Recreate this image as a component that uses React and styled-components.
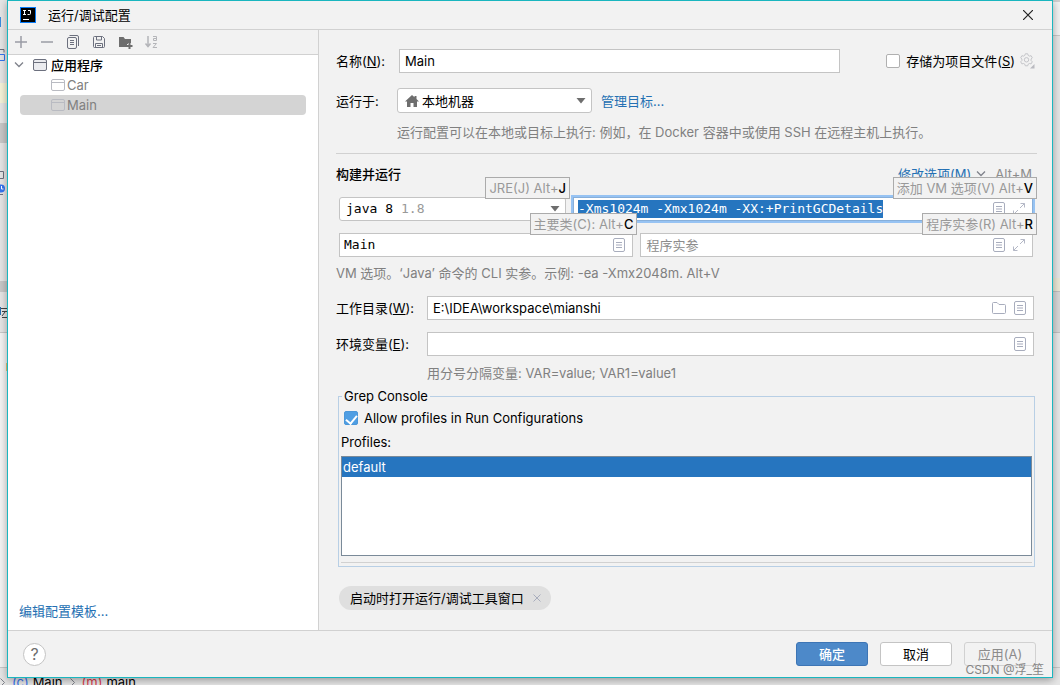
import React, { useEffect, useRef } from "react";
import styled, { createGlobalStyle } from "styled-components";

const DocIcon = () => (
  <svg width="12" height="14" viewBox="0 0 12 14" fill="none">
    <rect x="0.5" y="0.5" width="11" height="13" rx="1.5" stroke="#a8adbd" />
    <path d="M3 4.5h6M3 9.5h6" stroke="#a8adbd" />
    <path d="M3 7h6" stroke="#d3d5de" strokeWidth="2" />
  </svg>
);

const ExpandIcon = () => (
  <svg width="12" height="12" viewBox="0 0 12 12" fill="none" stroke="#b4b8c6">
    <path d="M7.500 .5h4V4.500M11.500 .5L7 5M4.500 11.500h-4V7.500M.5 11.500L5 7" />
  </svg>
);

const FolderIcon = () => (
  <svg width="14" height="12" viewBox="0 0 14 12" fill="none" stroke="#a8adbd">
    <path d="M.5 10V1.500Q.5 .5 1.500 .5H5L7 2.500h5.500q1 0 1 1V10.500q0 1-1 1h-11q-1 0-1-1z" />
  </svg>
);

const AppIcon = ({ faded }) => (
  <svg width="14" height="12" viewBox="0 0 14 12" fill="none">
    <rect
      x="0.5"
      y="0.5"
      width="13"
      height="11"
      rx="1.5"
      fill={faded ? "none" : "#ebecf0"}
      stroke={faded ? "#b9bbc2" : "#6c707e"}
    />
    <path d="M.5 3.500h13" stroke={faded ? "#b9bbc2" : "#6c707e"} />
  </svg>
);

const LogoIcon = () => (
  <svg width="16" height="16" viewBox="0 0 16 16" fill="none">
    <rect x="0.5" y="0.5" width="15" height="15" fill="#000" stroke="#087cfa" />
    <path
      d="M3 3.500h3M4.500 3.500v4M3 7.500h3M8 3.500h2.500V6.500q0 1-1 1H7.500"
      stroke="#fff"
    />
    <path d="M3 12.500h6" stroke="#fff" />
  </svg>
);

const HomeIcon = () => (
  <svg width="14" height="12" viewBox="0 0 14 12" fill="#6e6e6e">
    <path d="M7 0L0 6.500h2V12h3.500V8h3v4H12V6.500h2L11.500 4V1H9.500v1.300z" />
  </svg>
);

const ArrowIcon = () => (
  <svg width="10" height="6" viewBox="0 0 10 6" fill="#6e6e6e">
    <path d="M.5 0h9L5 5.500z" />
  </svg>
);

const ChevronIcon = () => (
  <svg width="10" height="6" viewBox="0 0 10 6" fill="none" stroke="#7f828b">
    <path d="M1 .5l4 4 4-4" strokeWidth="1.300" />
  </svg>
);

const CrumbIcon = () => (
  <svg width="5" height="9" viewBox="0 0 5 9" fill="none" stroke="#7f828b">
    <path d="M.5 .5l4 4-4 4" />
  </svg>
);

const GearIcon = () => (
  <svg width="16" height="16" viewBox="0 0 16 16" fill="none" stroke="#c4c5c9">
    <path d="M5.800 2.400L6.300 .8h2.400l.5 1.600 1.200.7 1.700-.4 1.200 2.100-1.200 1.200v1.600l1.200 1.200-1.200 2.100-1.700-.4-1.200.7-.5 1.600H6.300l-.5-1.600-1.200-.7-1.700.4L1.700 8.800l1.200-1.200V6L1.700 4.800l1.200-2.100 1.700.4z" />
    <circle cx="7.500" cy="6.800" r="2.200" />
    <path d="M15.500 11v4.500H11z" fill="#b9bac0" stroke="none" />
  </svg>
);

const tools = [
  {
    name: "添加",
    icon: <path d="M8 2v12M2 8h12" stroke="#9a9ca5" strokeWidth="1.500" />,
  },
  { name: "移除", icon: <path d="M2 8h12" stroke="#9a9ca5" strokeWidth="1.500" /> },
  {
    name: "复制",
    icon: (
      <g stroke="#6c707e">
        <rect x="2.500" y="3.500" width="9" height="11" rx="1.500" />
        <path d="M4.500 1.500H12q1.500 0 1.500 1.500v9M5 6.500h4M5 8.500h4M5 10.500h4" />
      </g>
    ),
  },
  {
    name: "保存",
    icon: (
      <g stroke="#6c707e">
        <path d="M2.500 3.500q0-1 1-1h8l2 2v8q0 1-1 1h-9q-1 0-1-1z" />
        <path d="M5.500 2.500v3.500h5V2.500M4.500 13.500v-4h7v4M6 11.500h4" />
      </g>
    ),
  },
  {
    name: "新建文件夹",
    icon: (
      <g fill="#6e6e6e">
        <path d="M2 3h4.500l1.500 2H14v4h-3v1h-1v3H2z" />
        <path d="M11.500 9h2v2h2v2h-2v2h-2v-2h-2v-2h2z" />
      </g>
    ),
  },
  {
    name: "排序",
    icon: (
      <g stroke="#b4b5b9">
        <path d="M5 2v10.500M2.500 9.500L5 12.500l2.500-3" strokeWidth="1.500" />
        <path d="M10 2.500h3.500v4h-3v-2h3M10 9.500h3.500l-3.500 4H14" />
      </g>
    ),
  },
];

const Field = ({ inputRef, mono, focused, icons = [], ...rest }) => (
  <FieldBox $focused={focused}>
    <FieldInput ref={inputRef} $mono={mono} spellCheck={false} {...rest} />
    {icons.map((Icon, i) => (
      <IconButton key={i} type="button" aria-label="展开">
        <Icon />
      </IconButton>
    ))}
  </FieldBox>
);

const Tip = ({ text, letter }) => (
  <TipBox>
    {text}
    <b>{letter}</b>
  </TipBox>
);

const App = () => {
  const vmRef = useRef(null);

  useEffect(() => {
    vmRef.current.focus();
    vmRef.current.select();
  }, []);

  return (
    <Desktop>
      <GlobalStyle />
      <Backdrop aria-hidden="true">
        <BackdropBody>
          <LeftEdge>
            <svg width="7" height="400" viewBox="0 0 7 400" fill="none">
              <path fill="#3b8be0" d="M0 17h1v10H0z" />
              <path stroke="#6c707e" d="M0 49.500h4v3M0 171.500h3.500v7H0M0 194.500h3" />
              <path stroke="#3574f0" d="M0 54.500h4.500v6H0" />
              <circle cx="1" cy="188.500" r="4" fill="#3574f0" />
              <path stroke="#fff" d="M1.500 186v3h2" />
              <path stroke="#444" d="M1 308.500h6M2 311.500h5M5 312l-3 4M2 317.500h5" />
              <path stroke="#2470b3" d="M.5 307v8" />
              <path fill="#e8c779" d="M6 363h1v8H6z" />
            </svg>
          </LeftEdge>
          <RightEdge />
        </BackdropBody>
        <Crumbs>
          <CrumbIcon />
          <Badge $color="#3574f0">(c)</Badge>
          <span>Main</span>
          <CrumbIcon />
          <Badge $color="#db3b4b">(m)</Badge>
          <span>main</span>
        </Crumbs>
      </Backdrop>

      <Dialog role="dialog" aria-label="运行/调试配置">
        <TitleBar>
          <LogoIcon />
          <Title>运行/调试配置</Title>
          <IconButton type="button" aria-label="关闭">
            <svg width="10" height="10" viewBox="0 0 10 10" stroke="#222">
              <path d="M0 0l10 10M10 0L0 10" strokeWidth="1.200" />
            </svg>
          </IconButton>
        </TitleBar>

        <Body>
          <Side>
            <Toolbar>
              {tools.map((tool) => (
                <IconButton key={tool.name} type="button" aria-label={tool.name}>
                  <svg width="16" height="16" viewBox="0 0 16 16" fill="none">
                    {tool.icon}
                  </svg>
                </IconButton>
              ))}
            </Toolbar>
            <Tree>
              <TreeRoot>
                <ChevronIcon />
                <AppIcon />
                应用程序
              </TreeRoot>
              <TreeItem>
                <AppIcon faded />
                Car
              </TreeItem>
              <TreeItem $selected>
                <AppIcon faded />
                Main
              </TreeItem>
            </Tree>
            <SideFooter>
              <Link href="#templates">编辑配置模板...</Link>
            </SideFooter>
          </Side>

          <Pane>
            <NameRow>
              <Label htmlFor="name" $width="63px">
                名称(<u>N</u>):
              </Label>
              <Field id="name" defaultValue="Main" />
              <StoreBox>
                <CheckLabel>
                  <Checkbox type="checkbox" />
                  <span>
                    存储为项目文件(<u>S</u>)
                  </span>
                </CheckLabel>
                <IconButton type="button" aria-label="设置">
                  <GearIcon />
                </IconButton>
              </StoreBox>
            </NameRow>

            <TargetRow>
              <Label htmlFor="target" $width="61px">
                运行于:
              </Label>
              <Combo $width="195px">
                <Select id="target" $indent="24px">
                  <option>本地机器</option>
                </Select>
                <ComboFace $indent="8px">
                  <HomeIcon />
                  <ArrowIcon />
                </ComboFace>
              </Combo>
              <Link href="#targets">管理目标...</Link>
            </TargetRow>
            <TargetHint>
              运行配置可以在本地或目标上执行: 例如，在 Docker 容器中或使用 SSH
              在远程主机上执行。
            </TargetHint>

            <Divider />

            <SectionHead>
              <SectionTitle>构建并运行</SectionTitle>
              <Link href="#options">修改选项(M)</Link>
              <ChevronIcon />
              <Muted>Alt+M</Muted>
            </SectionHead>

            <RunFields>
              <RunRow>
                <Combo $width="227px">
                  <Select aria-label="JRE" $mono $indent="6px">
                    <option>java 8</option>
                  </Select>
                  <ComboFace $mono $indent="62px">
                    1.8
                    <ArrowIcon />
                  </ComboFace>
                  <Tip text="JRE(J) Alt+" letter="J" />
                </Combo>
                <Cell $grow={1}>
                  <Field
                    inputRef={vmRef}
                    mono
                    focused
                    aria-label="VM 选项"
                    defaultValue="-Xms1024m -Xmx1024m -XX:+PrintGCDetails"
                    icons={[DocIcon, ExpandIcon]}
                  />
                  <Tip text="添加 VM 选项(V) Alt+" letter="V" />
                </Cell>
              </RunRow>
              <RunRow>
                <Cell $grow={3}>
                  <Field
                    mono
                    aria-label="主要类"
                    defaultValue="Main"
                    icons={[DocIcon]}
                  />
                  <Tip text="主要类(C): Alt+" letter="C" />
                </Cell>
                <Cell $grow={4}>
                  <Field
                    aria-label="程序实参"
                    placeholder="程序实参"
                    icons={[DocIcon, ExpandIcon]}
                  />
                  <Tip text="程序实参(R) Alt+" letter="R" />
                </Cell>
              </RunRow>
            </RunFields>
            <VmHint>
              VM 选项。‘Java’ 命令的 CLI 实参。示例: -ea -Xmx2048m. Alt+V
            </VmHint>

            <PathRow>
              <Label htmlFor="dir" $width="91px">
                工作目录(<u>W</u>):
              </Label>
              <Field
                id="dir"
                defaultValue="E:\IDEA\workspace\mianshi"
                icons={[FolderIcon, DocIcon]}
              />
            </PathRow>
            <PathRow>
              <Label htmlFor="env" $width="91px">
                环境变量(<u>E</u>):
              </Label>
              <Field id="env" icons={[DocIcon]} />
            </PathRow>
            <EnvHint>用分号分隔变量: VAR=value; VAR1=value1</EnvHint>

            <Group>
              <Legend>Grep Console</Legend>
              <AllowLabel>
                <Checkbox type="checkbox" defaultChecked />
                Allow profiles in Run Configurations
              </AllowLabel>
              <ProfilesTitle>Profiles:</ProfilesTitle>
              <ProfileList>
                <ProfileItem>default</ProfileItem>
              </ProfileList>
              <GroupLine />
            </Group>

            <Chip>
              启动时打开运行/调试工具窗口
              <IconButton type="button" aria-label="移除">
                <svg width="8" height="8" viewBox="0 0 8 8" stroke="#a8adbd">
                  <path d="M.5 .5l7 7M7.500 .5l-7 7" />
                </svg>
              </IconButton>
            </Chip>
          </Pane>
        </Body>

        <Footer>
          <Help type="button">?</Help>
          <Button type="button" $primary>
            确定
          </Button>
          <Button type="button">取消</Button>
          <Button type="button" disabled>
            应用(A)
          </Button>
        </Footer>
      </Dialog>
      <Watermark>CSDN @浮_笙</Watermark>
    </Desktop>
  );
};

const ui = `"Inter", "Noto Sans CJK SC", sans-serif`;
const code = `"DejaVu Sans Mono", "Noto Sans CJK SC", monospace`;

const GlobalStyle = createGlobalStyle`
  * {
    box-sizing: border-box;
  }
  body {
    margin: 0;
    font: 13px/18px ${ui};
    color: #000;
  }
  input, select, button {
    font: inherit;
    color: inherit;
  }
  svg {
    display: block;
    flex: none;
  }
`;

const Desktop = styled.div`
  position: relative;
  display: flex;
  min-height: 100vh;
  padding: 0 7px 7px;
  overflow: hidden;
`;

const Backdrop = styled.div`
  position: absolute;
  inset: 0;
  display: flex;
  flex-direction: column;
  background: #e6e6e6;
`;

const BackdropBody = styled.div`
  display: flex;
  justify-content: space-between;
  flex: 1;
  min-height: 0;
  overflow: hidden;
`;

const LeftEdge = styled.div`
  width: 7px;
  background: linear-gradient(
    #e6e6e6 83px,
    #f5f3d8 83px 103px,
    #e6e6e6 103px 123px,
    #c8c8c8 123px 143px,
    #e6e6e6 143px 281px,
    #c8c8c8 281px 292px,
    #e6e6e6 292px 332px,
    #c8c8c8 332px 333px,
    #f4f4f4 333px
  );
`;

const RightEdge = styled.div`
  width: 7px;
  background: linear-gradient(
    #d0d0d0 2px,
    #f2f2f2 2px 35px,
    #c8c8c8 35px 36px,
    #e6e6e6 36px 278px,
    #ebe8d6 278px 291px,
    #c0c0c0 291px 292px,
    #d8d8d8 292px 332px,
    #c0c0c0 332px 333px,
    #e8e8e8 333px
  );
`;

const Crumbs = styled.div`
  display: flex;
  align-items: center;
  gap: 7px;
  height: 18px;
  padding-top: 11px;
  border-top: 1px solid #c8c8c8;
  overflow: hidden;
`;

const Badge = styled.span`
  margin-right: -3px;
  color: ${(props) => props.$color};
`;

const Dialog = styled.div`
  position: relative;
  display: flex;
  flex-direction: column;
  flex: 1;
  min-width: 0;
  background: #f2f2f2;
  border: 1px solid #1ab6bf;
  box-shadow: 0 2px 8px rgba(0, 0, 0, 0.35);
`;

const TitleBar = styled.header`
  display: flex;
  align-items: center;
  gap: 12px;
  height: 29px;
  padding: 0 19px 0 12px;
  border-bottom: 1px solid #d1d1d1;
`;

const Title = styled.h1`
  flex: 1;
  margin: 0;
  font-size: 13px;
  font-weight: 400;
`;

const IconButton = styled.button`
  display: flex;
  flex: none;
  padding: 0;
  border: 0;
  background: none;
`;

const Body = styled.div`
  display: flex;
  flex: 1;
`;

const Side = styled.aside`
  display: flex;
  flex-direction: column;
  flex: none;
  width: 311px;
  background: #fff;
  border-right: 1px solid #d1d1d1;
`;

const Toolbar = styled.div`
  display: flex;
  align-items: center;
  gap: 10px;
  height: 25px;
  padding: 0 5px;
  background: #f2f2f2;
  border-bottom: 1px solid #d1d1d1;
`;

const Tree = styled.ul`
  flex: 1;
  margin: 0;
  padding: 0 12px;
  list-style: none;
  line-height: 20px;
`;

const TreeRoot = styled.li`
  display: flex;
  align-items: center;
  gap: 4px;
  height: 20px;
  margin-left: -6px;
  font-weight: 500;

  svg:first-child {
    margin-right: 5px;
  }
`;

const TreeItem = styled.li`
  display: flex;
  align-items: center;
  gap: 2px;
  height: 20px;
  padding-left: 31px;
  border-radius: 4px;
  color: #808080;
  background: ${(props) => (props.$selected ? "#d4d4d4" : "none")};
`;

const SideFooter = styled.div`
  padding: 0 11px 10px;
`;

const Link = styled.a`
  color: #2470b3;
  text-decoration: none;
  white-space: nowrap;
`;

const Pane = styled.main`
  flex: 1;
  min-width: 0;
  padding: 19px 15px 20px 17px;
`;

const Row = styled.div`
  display: flex;
  align-items: center;
`;

const NameRow = styled(Row)`
  margin-bottom: 15px;
`;

const TargetRow = styled(Row)`
  ${Link} {
    margin-left: 9px;
  }
`;

const Label = styled.label`
  flex: none;
  width: ${(props) => props.$width};
`;

const FieldBox = styled.div`
  display: flex;
  align-items: center;
  flex: 1;
  gap: 8px;
  min-width: 0;
  height: 24px;
  padding-right: 7px;
  background: #fff;
  border: 1px solid ${(props) => (props.$focused ? "#87afda" : "#c4c4c4")};
  box-shadow: ${(props) => (props.$focused ? "0 0 0 2px #97c3f3" : "none")};
`;

const FieldInput = styled.input`
  flex: 1;
  min-width: 0;
  height: 18px;
  padding: 0 0 0 ${(props) => (props.$mono ? "4px" : "5px")};
  border: 0;
  outline: 0;
  background: none;
  font-family: ${(props) => (props.$mono ? code : ui)};
  line-height: 18px;

  &::placeholder {
    color: #8c8c8c;
  }
  &::selection {
    background: #2675bf;
    color: #fff;
  }
`;

const StoreBox = styled(Row)`
  flex: none;
  gap: 4px;
  margin: 0 2px 0 46px;
`;

const CheckLabel = styled.label`
  display: flex;
  align-items: center;
  gap: 6px;
`;

const Checkbox = styled.input`
  appearance: none;
  display: flex;
  justify-content: center;
  width: 14px;
  height: 14px;
  margin: 0;
  background: #fff;
  border: 1px solid #b0b0b0;
  border-radius: 2px;

  &:checked {
    background: #4f9ee3;
    border-color: #4b97d9;
  }
  &:checked::before {
    content: "";
    width: 5px;
    height: 9px;
    margin-top: 1px;
    border: solid #fff;
    border-width: 0 2px 2px 0;
    transform: rotate(40deg);
  }
`;

const Combo = styled.div`
  position: relative;
  display: grid;
  flex: none;
  width: ${(props) => props.$width};
  height: 25px;

  > * {
    grid-area: 1 / 1;
  }
`;

const Select = styled.select`
  appearance: none;
  width: 100%;
  padding: 0 0 0 ${(props) => props.$indent};
  border: 1px solid #c4c4c4;
  border-radius: 3px;
  background: #fff;
  font-family: ${(props) => (props.$mono ? code : ui)};
`;

const ComboFace = styled.div`
  display: flex;
  align-items: center;
  justify-content: space-between;
  padding: 0 6px 0 ${(props) => props.$indent};
  color: #999;
  font-family: ${(props) => (props.$mono ? code : ui)};
  pointer-events: none;
`;

const Muted = styled.span`
  color: #8c8c8c;
`;

const Hint = styled.p`
  margin: 0;
  color: #808080;
`;

const TargetHint = styled(Hint)`
  margin: 10px 0 12px 61px;
`;

const VmHint = styled(Hint)`
  margin: 7px 0 14px;
`;

const EnvHint = styled(Hint)`
  margin: -4px 0 5px 91px;
`;

const Divider = styled.hr`
  height: 1px;
  margin: 0 0 11px;
  border: 0;
  background: #d1d1d1;
`;

const SectionHead = styled(Row)`
  gap: 5px;
  margin-bottom: 14px;
  padding-right: 5px;

  ${Muted} {
    margin-left: 4px;
  }
`;

const SectionTitle = styled.h2`
  flex: 1;
  margin: 0;
  font-size: 13px;
  font-weight: 500;
`;

const RunFields = styled.div`
  display: flex;
  flex-direction: column;
  gap: 12px;
  margin: 0 4px 0 3px;
`;

const RunRow = styled.div`
  display: flex;
  gap: 7px;
  height: 24px;

  ${Combo} {
    height: 24px;
  }
`;

const Cell = styled.div`
  position: relative;
  display: flex;
  flex: ${(props) => props.$grow} 1 0;
  min-width: 0;
`;

const TipBox = styled.span`
  position: absolute;
  z-index: 1;
  top: -20px;
  right: -4px;
  height: 22px;
  padding: 0 3px;
  border: 1px solid #ababab;
  background: #f2f2f2;
  color: #999;
  line-height: 20px;
  white-space: nowrap;

  b {
    color: #000;
    font-weight: 500;
  }
`;

const PathRow = styled(Row)`
  margin: 0 3px 12px 0;
`;

const Group = styled.fieldset`
  min-width: 0;
  margin: 0 2px 19px;
  padding: 0 2px 3px;
  border: 1px solid #b8cfe5;
`;

const Legend = styled.legend`
  margin-left: 1px;
  padding: 0 2px;
`;

const AllowLabel = styled(CheckLabel)`
  margin: 4px 0 6px 3px;
`;

const ProfilesTitle = styled.div`
  margin-bottom: 5px;
`;

const ProfileList = styled.ul`
  height: 100px;
  margin: 0 0 6px;
  padding: 0;
  border: 1px solid #7a8a99;
  background: #fff;
  list-style: none;
`;

const ProfileItem = styled.li`
  padding: 0 1px;
  background: #2675bf;
  color: #fff;
  line-height: 20px;
`;

const GroupLine = styled.div`
  height: 1px;
  background: #d1d1d1;
`;

const Chip = styled.div`
  display: inline-flex;
  align-items: center;
  gap: 9px;
  height: 24px;
  margin-left: 3px;
  padding: 0 10px 0 11px;
  border-radius: 12px;
  background: #dfdfdf;
`;

const Footer = styled.footer`
  display: flex;
  align-items: center;
  gap: 12px;
  height: 47px;
  padding: 0 16px 0 15px;
  border-top: 1px solid #d1d1d1;
`;

const Help = styled.button`
  width: 23px;
  height: 23px;
  margin-right: auto;
  padding: 0;
  border: 1px solid #c4c4c4;
  border-radius: 50%;
  background: #fff;
  color: #6e6e6e;
  font-size: 16px;
  line-height: 20px;
`;

const Button = styled.button`
  width: 72px;
  height: 24px;
  padding: 0;
  border: 1px solid ${(props) => (props.$primary ? "#3d75b5" : "#c4c4c4")};
  border-radius: 3px;
  background: ${(props) => (props.$primary ? "#4d89c9" : "#fff")};
  color: ${(props) => (props.$primary ? "#fff" : "#000")};
  font-weight: ${(props) => (props.$primary ? 500 : 400)};

  &:disabled {
    background: none;
    border-color: #d1d1d1;
    color: #8c8c8c;
  }
`;

const Watermark = styled.div`
  position: absolute;
  right: 16px;
  bottom: 6px;
  color: #858585;
  font-size: 12px;
`;

export default App;
